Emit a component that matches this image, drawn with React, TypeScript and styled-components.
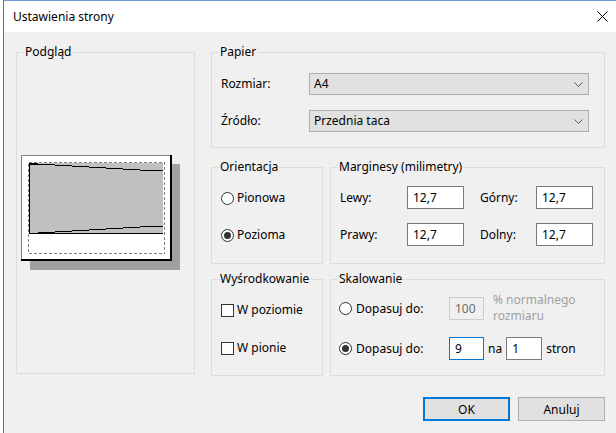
import React from "react";
import styled, { createGlobalStyle } from "styled-components";

const Global = createGlobalStyle`
  html, body { margin: 0; padding: 0; background: #ffffff; }
  body {
    font-family: "Noto Sans", "Liberation Sans", sans-serif;
    font-size: 12px;
    color: #000;
  }
  * { box-sizing: border-box; }
`;

const Window = styled.div`
  margin-left: 3px;
  width: 613px;
  height: 433px;
  border-left: 1px solid #2b79c4;
  border-top: 1px solid #6a9bd3;
  background: #f0f0f0;
  display: flex;
  flex-direction: column;
`;

const TitleBar = styled.div`
  height: 31px;
  flex: none;
  background: #ffffff;
  display: flex;
  align-items: center;
  justify-content: space-between;
  padding: 0 8px 0 9px;
  line-height: 16px;
`;

const Content = styled.div`
  padding: 20px 11px 0 12px;
`;

const Columns = styled.div`
  display: grid;
  grid-template-columns: 179px 394px;
  column-gap: 16px;
  align-items: start;
`;

const Stack = styled.div`
  display: flex;
  flex-direction: column;
`;

const Row = styled.div<{ $mt: number }>`
  display: flex;
  gap: 7px;
  margin-top: ${(p) => p.$mt}px;
`;

const GroupBox = styled.div<{ $w?: number; $h: number }>`
  position: relative;
  border: 1px solid #dcdcdc;
  width: ${(p) => (p.$w ? `${p.$w}px` : "100%")};
  height: ${(p) => p.$h}px;
`;

const Legend = styled.span`
  position: absolute;
  top: -9px;
  left: 7px;
  padding: 0 1px;
  line-height: 16px;
  background: #f0f0f0;
  white-space: nowrap;
`;

const PreviewArea = styled.div`
  height: 100%;
  display: flex;
  align-items: center;
  padding-left: 4px;
`;

const PaperGrid = styled.div`
  display: grid;
  grid-template-columns: 88px 280px;
  row-gap: 15px;
  align-items: center;
  padding: 20px 0 0 9px;
`;

const Label = styled.span<{ $pl?: number }>`
  line-height: 16px;
  white-space: nowrap;
  padding-left: ${(p) => p.$pl ?? 0}px;
`;

const Select = styled.div`
  height: 22px;
  background: #e1e1e1;
  border: 1px solid #adadad;
  display: flex;
  align-items: center;
  justify-content: space-between;
  padding: 0 5px 0 4px;
  line-height: 16px;
`;

const OptionList = styled.div<{ $gap: number; $pt: number }>`
  display: flex;
  flex-direction: column;
  gap: ${(p) => p.$gap}px;
  padding: ${(p) => p.$pt}px 0 0 9px;
`;

const OptionRow = styled.label<{ $gap?: number }>`
  display: flex;
  align-items: center;
  gap: ${(p) => p.$gap ?? 3}px;
  height: 20px;
  line-height: 16px;
  white-space: nowrap;
`;

const Radio = styled.span<{ $checked?: boolean }>`
  width: 13px;
  height: 13px;
  flex: none;
  border-radius: 50%;
  border: 1px solid #333333;
  background: #ffffff;
  display: flex;
  align-items: center;
  justify-content: center;
  &::after {
    content: "";
    display: ${(p) => (p.$checked ? "block" : "none")};
    width: 7px;
    height: 7px;
    border-radius: 50%;
    background: #333333;
  }
`;

const Check = styled.span`
  width: 13px;
  height: 13px;
  flex: none;
  border: 1px solid #333333;
  background: #ffffff;
`;

const MarginGrid = styled.div`
  display: grid;
  grid-template-columns: 67px 57px 72px 57px;
  grid-auto-rows: 23px;
  row-gap: 14px;
  align-items: center;
  padding: 18px 0 0 9px;
`;

const Field = styled.input<{ $w: number; $tone?: "normal" | "focus" | "disabled" }>`
  width: ${(p) => p.$w}px;
  height: 23px;
  margin: 0;
  padding: 0 0 0 5px;
  font-family: inherit;
  font-size: 12px;
  line-height: 16px;
  outline: none;
  border-radius: 0;
  border: 1px solid
    ${(p) =>
      p.$tone === "focus" ? "#0078d7" : p.$tone === "disabled" ? "#cccccc" : "#7a7a7a"};
  background: ${(p) => (p.$tone === "disabled" ? "#f0f0f0" : "#ffffff")};
  color: ${(p) => (p.$tone === "disabled" ? "#6d6d6d" : "#000000")};
`;

const ScaleGrid = styled.div`
  display: grid;
  grid-template-columns: 110px auto;
  grid-auto-rows: 23px;
  row-gap: 17px;
  align-items: center;
  padding: 17px 0 0 8px;
`;

const Inline = styled.div`
  display: flex;
  align-items: center;
`;

const Note = styled.span`
  align-self: flex-start;
  display: flex;
  flex-direction: column;
  margin: -2px 0 0 9px;
  line-height: 16px;
  color: #a0a0a0;
`;

const Word = styled.span<{ $ml: number; $mr?: number }>`
  margin-left: ${(p) => p.$ml}px;
  margin-right: ${(p) => p.$mr ?? 0}px;
  line-height: 16px;
`;

const Footer = styled.div`
  display: flex;
  justify-content: flex-end;
  gap: 8px;
  margin-top: 21px;
`;

const Button = styled.button<{ $default?: boolean }>`
  width: 87px;
  height: 24px;
  margin: 0;
  padding: 0;
  font-family: inherit;
  font-size: 12px;
  color: #000;
  background: #e1e1e1;
  border: ${(p) => (p.$default ? "2px solid #0078d7" : "1px solid #adadad")};
  border-radius: 0;
`;

const CloseIcon = () => (
  <svg width="11" height="11" viewBox="0 0 11 11">
    <path d="M0.5 0.5 L10.5 10.5 M10.5 0.5 L0.5 10.5" stroke="#000" strokeWidth="1" />
  </svg>
);

const Chevron = () => (
  <svg width="9" height="5" viewBox="0 0 9 5">
    <path d="M0.5 0.5 L4.5 4.5 L8.5 0.5" stroke="#555" strokeWidth="1" fill="none" />
  </svg>
);

const PagePreview = () => (
  <svg width="160" height="116" viewBox="0 0 160 116" shapeRendering="crispEdges">
    <rect x="9" y="9" width="150" height="106" fill="#a0a0a0" />
    <rect x="0" y="0" width="151" height="106" fill="#ffffff" />
    <rect x="0" y="0" width="151" height="1" fill="#808080" />
    <rect x="0" y="0" width="1" height="106" fill="#808080" />
    <rect x="149" y="0" width="2" height="106" fill="#000000" />
    <rect x="0" y="104" width="151" height="2" fill="#000000" />
    <rect x="8" y="8" width="134" height="70" fill="#c0c0c0" />
    <rect
      x="7.5"
      y="7.5"
      width="136"
      height="91"
      fill="none"
      stroke="#808080"
      strokeWidth="1"
      strokeDasharray="3 2"
    />
    <path d="M8.5 78 L8.5 8" stroke="#000" strokeWidth="1" />
    <path d="M8 78.5 L142 78.5" stroke="#000" strokeWidth="1" />
    <path
      d="M8 8.5 H17 M17 9.5 H34 M34 10.5 H51 M51 11.5 H68 M68 12.5 H85 M85 13.5 H102 M102 14.5 H119 M119 15.5 H142"
      stroke="#000"
      strokeWidth="1"
    />
    <path d="M8 8.5 H17" stroke="#000" strokeWidth="2" />
    <path
      d="M17 77.5 H34 M34 76.5 H51 M51 75.5 H68 M68 74.5 H85 M85 73.5 H102 M102 72.5 H119 M119 71.5 H142"
      stroke="#000"
      strokeWidth="1"
    />
  </svg>
);

export default function App() {
  return (
    <>
      <Global />
      <Window>
        <TitleBar>
          <span>Ustawienia strony</span>
          <CloseIcon />
        </TitleBar>
        <Content>
          <Columns>
            <GroupBox $h={322}>
              <Legend>Podgląd</Legend>
              <PreviewArea>
                <PagePreview />
              </PreviewArea>
            </GroupBox>
            <Stack>
              <GroupBox $h={96}>
                <Legend>Papier</Legend>
                <PaperGrid>
                  <Label>Rozmiar:</Label>
                  <Select>
                    <span>A4</span>
                    <Chevron />
                  </Select>
                  <Label>Źródło:</Label>
                  <Select>
                    <span>Przednia taca</span>
                    <Chevron />
                  </Select>
                </PaperGrid>
              </GroupBox>
              <Row $mt={19}>
                <GroupBox $w={112} $h={97}>
                  <Legend>Orientacja</Legend>
                  <OptionList $gap={17} $pt={20}>
                    <OptionRow>
                      <Radio />
                      Pionowa
                    </OptionRow>
                    <OptionRow>
                      <Radio $checked />
                      Pozioma
                    </OptionRow>
                  </OptionList>
                </GroupBox>
                <GroupBox $w={275} $h={97}>
                  <Legend>Marginesy (milimetry)</Legend>
                  <MarginGrid>
                    <Label>Lewy:</Label>
                    <Field $w={57} readOnly value="12,7" />
                    <Label $pl={16}>Górny:</Label>
                    <Field $w={57} readOnly value="12,7" />
                    <Label>Prawy:</Label>
                    <Field $w={57} readOnly value="12,7" />
                    <Label $pl={16}>Dolny:</Label>
                    <Field $w={57} readOnly value="12,7" />
                  </MarginGrid>
                </GroupBox>
              </Row>
              <Row $mt={15}>
                <GroupBox $w={112} $h={97}>
                  <Legend>Wyśrodkowanie</Legend>
                  <OptionList $gap={18} $pt={20}>
                    <OptionRow>
                      <Check />
                      W poziomie
                    </OptionRow>
                    <OptionRow>
                      <Check />
                      W pionie
                    </OptionRow>
                  </OptionList>
                </GroupBox>
                <GroupBox $w={275} $h={97}>
                  <Legend>Skalowanie</Legend>
                  <ScaleGrid>
                    <OptionRow $gap={4}>
                      <Radio />
                      Dopasuj do:
                    </OptionRow>
                    <Inline>
                      <Field $w={35} $tone="disabled" readOnly value="100" />
                      <Note>
                        <span>% normalnego</span>
                        <span>rozmiaru</span>
                      </Note>
                    </Inline>
                    <OptionRow $gap={4}>
                      <Radio $checked />
                      Dopasuj do:
                    </OptionRow>
                    <Inline>
                      <Field $w={35} $tone="focus" readOnly value="9" />
                      <Word $ml={4} $mr={4}>na</Word>
                      <Field $w={36} readOnly value="1" />
                      <Word $ml={4}>stron</Word>
                    </Inline>
                  </ScaleGrid>
                </GroupBox>
              </Row>
            </Stack>
          </Columns>
          <Footer>
            <Button $default>OK</Button>
            <Button>Anuluj</Button>
          </Footer>
        </Content>
      </Window>
    </>
  );
}
